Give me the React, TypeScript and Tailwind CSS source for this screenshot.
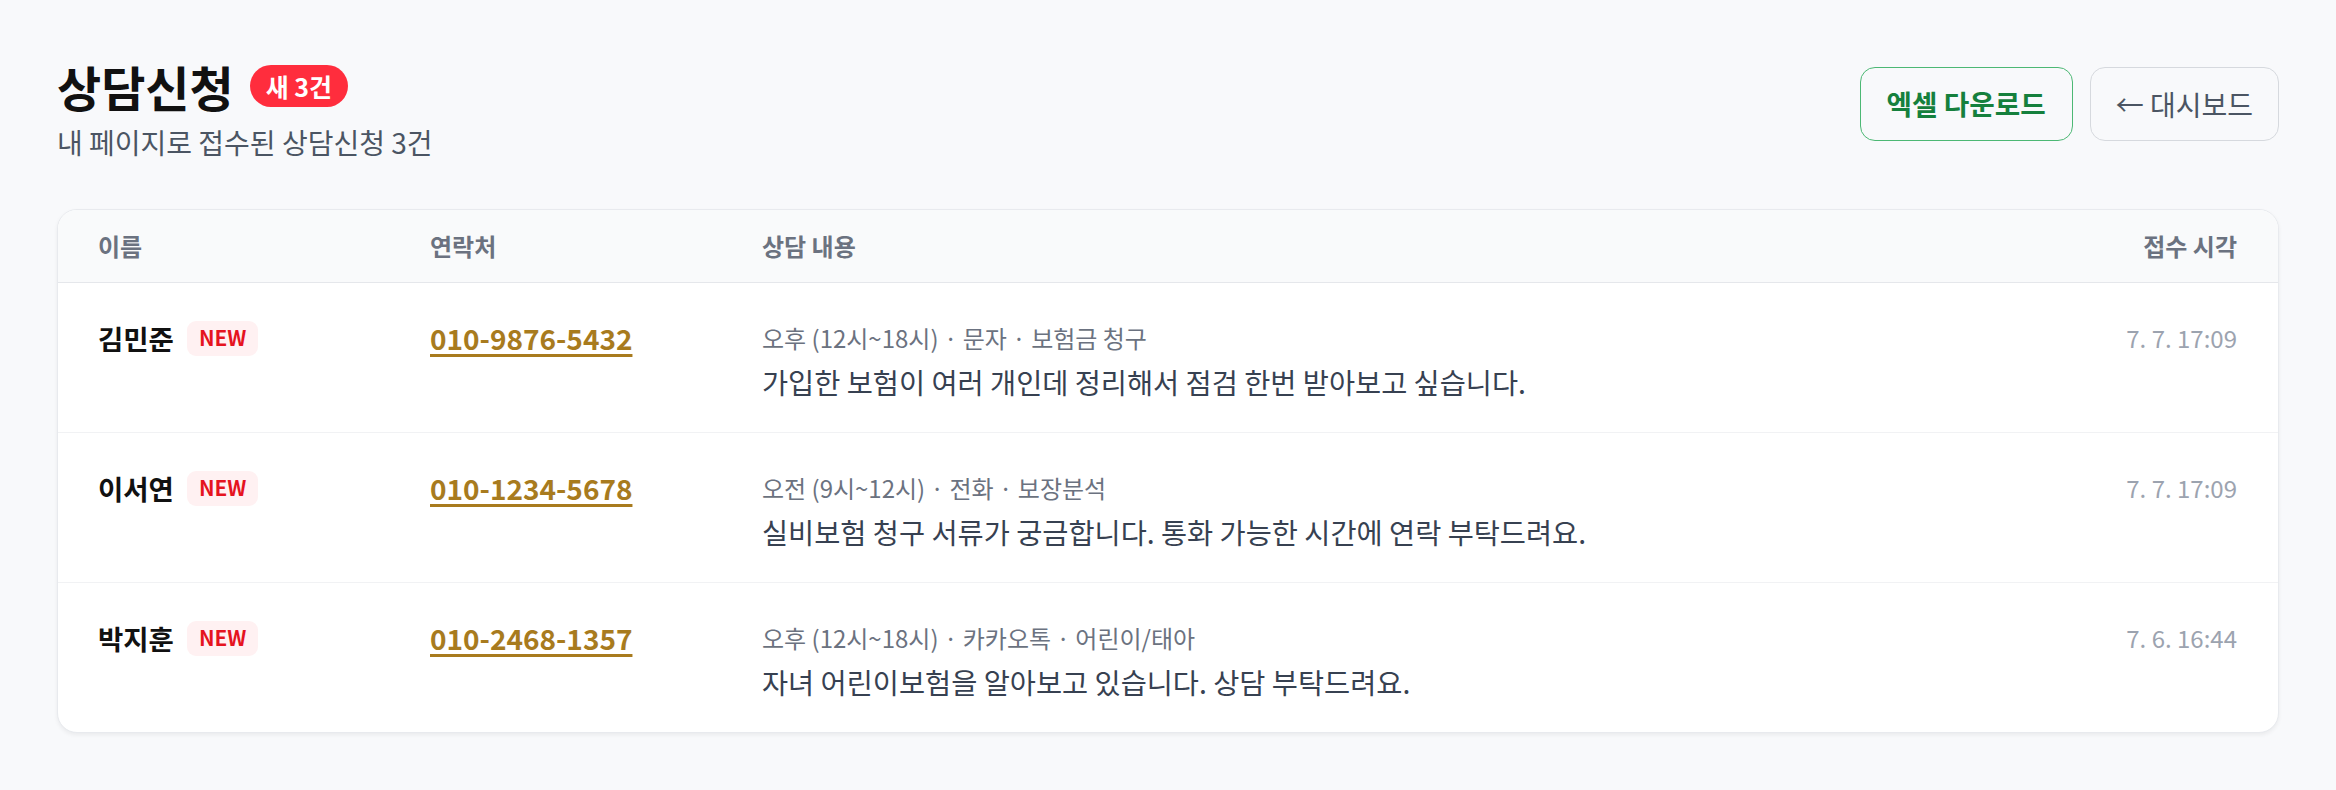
import React from "react";

type Row = {
  name: string;
  phone: string;
  time: string;
  method: string;
  topic: string;
  body: string;
  at: string;
};

const rows: Row[] = [
  {
    name: "김민준",
    phone: "010-9876-5432",
    time: "오후 (12시~18시)",
    method: "문자",
    topic: "보험금 청구",
    body: "가입한 보험이 여러 개인데 정리해서 점검 한번 받아보고 싶습니다.",
    at: "7. 7. 17:09",
  },
  {
    name: "이서연",
    phone: "010-1234-5678",
    time: "오전 (9시~12시)",
    method: "전화",
    topic: "보장분석",
    body: "실비보험 청구 서류가 궁금합니다. 통화 가능한 시간에 연락 부탁드려요.",
    at: "7. 7. 17:09",
  },
  {
    name: "박지훈",
    phone: "010-2468-1357",
    time: "오후 (12시~18시)",
    method: "카카오톡",
    topic: "어린이/태아",
    body: "자녀 어린이보험을 알아보고 있습니다. 상담 부탁드려요.",
    at: "7. 6. 16:44",
  },
];

export default function App() {
  return (
    <div className="min-h-screen bg-[#f8f9fb] px-[57px] pt-[56px] pb-[56px] font-['Noto_Sans_CJK_KR','Noto_Sans',sans-serif]">
      <div className="flex items-start justify-between">
        <div>
          <div className="flex items-center gap-[16px]">
            <h1 className="text-[48px] font-bold leading-[60px] text-[#111111]">상담신청</h1>
            <span className="flex h-[42px] items-center rounded-full bg-[#ff2d3d] px-[16px] text-[25px] font-bold leading-none text-white">
              새 3건
            </span>
          </div>
          <p className="mt-[6px] text-[28px] leading-[40px] text-[#4b5563]">내 페이지로 접수된 상담신청 3건</p>
        </div>
        <div className="mt-[11px] flex gap-[17px]">
          <button className="flex h-[74px] items-center rounded-[15px] border-[1.5px] border-[#4cb874] bg-transparent px-[26px] text-[27.7px] font-bold text-[#15803d]">
            엑셀 다운로드
          </button>
          <button className="flex h-[74px] items-center rounded-[15px] border-[1.5px] border-[#d6d9de] bg-transparent px-[25px] text-[28px] text-[#4b5563]">
            ← 대시보드
          </button>
        </div>
      </div>

      <div className="mt-[47px] overflow-hidden rounded-[20px] border border-[#e8eaee] bg-white shadow-[0_2px_4px_rgba(0,0,0,0.06)]">
        <div className="grid h-[73px] grid-cols-[332px_332px_1fr_auto] items-center border-b border-[#e5e7eb] bg-[#f9fafb] pl-[40px] pr-[41px] text-[24px] font-semibold text-[#6b7280]">
          <div>이름</div>
          <div>연락처</div>
          <div>상담 내용</div>
          <div className="text-right">접수 시각</div>
        </div>
        {rows.map((r, i) => (
          <div
            key={r.phone}
            className={`grid grid-cols-[332px_332px_1fr_auto] items-start pl-[40px] pr-[41px] pt-[37px] pb-[30px] ${
              i < rows.length - 1 ? "border-b border-[#f1f2f4]" : ""
            }`}
          >
            <div className="flex h-[36px] items-center gap-[13px]">
              <span className="text-[27.5px] font-bold leading-[36px] text-[#111111]">{r.name}</span>
              <span className="flex h-[35px] items-center rounded-[9px] bg-[#fff1f2] px-[12px] text-[20.8px] font-bold text-[#e5141f]">
                NEW
              </span>
            </div>
            <div>
              <a className="text-[28px] font-bold leading-[36px] text-[#a87b1e] underline decoration-[3px] underline-offset-[4px]">
                {r.phone}
              </a>
            </div>
            <div>
              <div className="text-[24px] leading-[36px] text-[#6b7280]">
                {r.time} · {r.method} · {r.topic}
              </div>
              <div className="mt-[6px] text-[28.4px] leading-[40px] text-[#374151]">{r.body}</div>
            </div>
            <div className="whitespace-nowrap text-right text-[24px] leading-[36px] text-[#9ca3af]">{r.at}</div>
          </div>
        ))}
      </div>
    </div>
  );
}
